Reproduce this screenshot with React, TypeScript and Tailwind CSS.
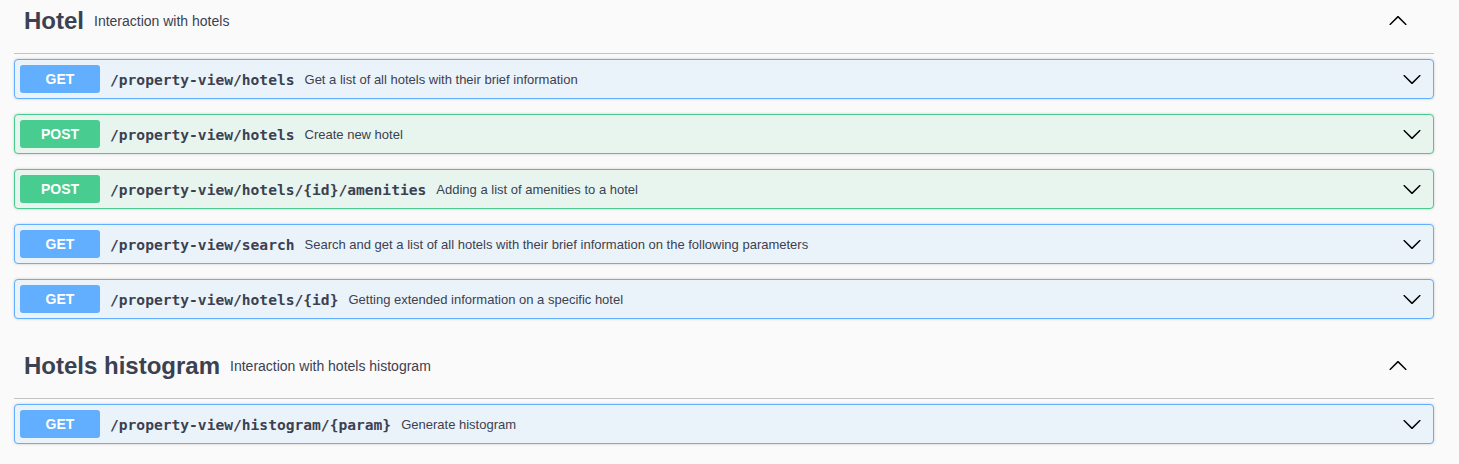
import React from "react";

type Op = { method: "GET" | "POST"; path: string; desc: string };

const Chevron = ({ up = false }: { up?: boolean }) => (
  <svg
    width="20"
    height="20"
    viewBox="0 0 20 20"
    className={up ? "rotate-180" : ""}
    fill="#000"
  >
    <path d="M17.418 6.109c.272-.268.709-.268.979 0s.271.701 0 .969l-7.908 7.83c-.27.268-.707.268-.979 0l-7.908-7.83c-.27-.268-.27-.701 0-.969.271-.268.709-.268.979 0L10 13.25l7.418-7.141z" />
  </svg>
);

const OpBlock = ({ op }: { op: Op }) => {
  const isGet = op.method === "GET";
  return (
    <div
      className={
        "mb-[15px] rounded-[4px] border shadow-[0_0_3px_rgba(0,0,0,0.19)] " +
        (isGet ? "border-[#61affe] bg-[#ebf3fa]" : "border-[#49cc90] bg-[#e8f5ef]")
      }
    >
      <div className="flex items-center p-[5px]">
        <span
          className={
            "flex h-[28px] w-[80px] items-center justify-center rounded-[3px] text-[14px] font-bold text-white " +
            (isGet ? "bg-[#61affe]" : "bg-[#49cc90]")
          }
          style={{ fontFamily: '"Liberation Sans", Arial, sans-serif' }}
        >
          {op.method}
        </span>
        <span
          className="px-[10px] pt-[1px] text-[14.6px] font-bold text-[#3b4151]"
          style={{ fontFamily: '"DejaVu Sans Mono", "Liberation Mono", monospace' }}
        >
          {op.path}
        </span>
        <span
          className="flex-1 pt-[1px] text-[13px] text-[#3b4151]"
          style={{ fontFamily: '"Liberation Sans", Arial, sans-serif' }}
        >
          {op.desc}
        </span>
        <span className="mr-[6px] flex items-center">
          <Chevron />
        </span>
      </div>
    </div>
  );
};

const Section = ({
  title,
  desc,
  ops,
}: {
  title: string;
  desc: string;
  ops: Op[];
}) => (
  <div>
    <div
      className="mb-[5px] flex h-[65px] items-center border-b border-[#c1c3c7] pl-[10px] pr-[26px] text-[#3b4151]"
      style={{ fontFamily: '"Liberation Sans", Arial, sans-serif' }}
    >
      <span className="text-[24px] font-bold">{title}</span>
      <span className="flex-1 px-[10px] text-[14px]">{desc}</span>
      <Chevron up />
    </div>
    {ops.map((op, i) => (
      <OpBlock key={i} op={op} />
    ))}
  </div>
);

export default function App() {
  return (
    <div className="min-h-screen overflow-hidden bg-[#fafafa]">
      <div className="ml-[14px] w-[1420px] -mt-[11px]">
        <Section
          title="Hotel"
          desc="Interaction with hotels"
          ops={[
            { method: "GET", path: "/property-view/hotels", desc: "Get a list of all hotels with their brief information" },
            { method: "POST", path: "/property-view/hotels", desc: "Create new hotel" },
            { method: "POST", path: "/property-view/hotels/{id}/amenities", desc: "Adding a list of amenities to a hotel" },
            {
              method: "GET",
              path: "/property-view/search",
              desc: "Search and get a list of all hotels with their brief information on the following parameters",
            },
            { method: "GET", path: "/property-view/hotels/{id}", desc: "Getting extended information on a specific hotel" },
          ]}
        />
        <Section
          title="Hotels histogram"
          desc="Interaction with hotels histogram"
          ops={[{ method: "GET", path: "/property-view/histogram/{param}", desc: "Generate histogram" }]}
        />
      </div>
    </div>
  );
}
